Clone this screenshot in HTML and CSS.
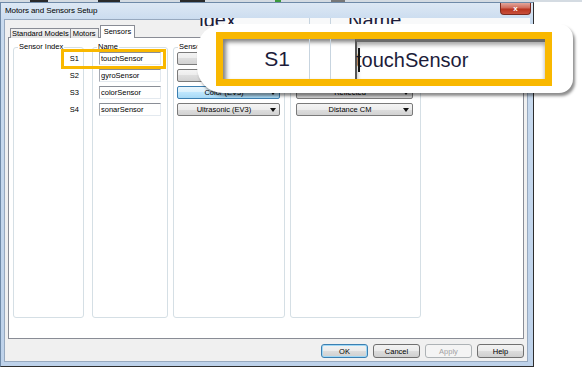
FILE: index.html
```html
<!DOCTYPE html>
<html lang="en">
<head>
  <meta charset="UTF-8" />
  <title>Motors and Sensors Setup</title>
  <link rel="stylesheet" href="styles.css">
</head>
<body>

  <!-- bit of the app behind the dialog -->
  <div class="screen-strip">
    <span class="blip blip-a"></span>
    <span class="blip blip-b"></span>
    <span class="blip blip-c"></span>
    <span class="blip blip-d"></span>
    <span class="blip blip-e"></span>
  </div>

  <div class="window">
    <div class="titlebar">
      <span class="title">Motors and Sensors Setup</span>
      <span class="close-btn">x</span>
    </div>

    <div class="dialog">
      <div class="tabs">
        <span class="tab tab-models">Standard Models</span>
        <span class="tab">Motors</span>
        <span class="tab tab-active">Sensors</span>
      </div>

      <div class="tab-page">
        <fieldset class="group group-index">
          <legend>Sensor Index</legend>
          <div class="rows">
            <div class="port">S1</div>
            <div class="port">S2</div>
            <div class="port">S3</div>
            <div class="port">S4</div>
          </div>
        </fieldset>

        <fieldset class="group group-name">
          <legend>Name</legend>
          <div class="rows">
            <input class="textbox" type="text" value="touchSensor" readonly />
            <input class="textbox" type="text" value="gyroSensor" readonly />
            <input class="textbox" type="text" value="colorSensor" readonly />
            <input class="textbox" type="text" value="sonarSensor" readonly />
          </div>
        </fieldset>

        <fieldset class="group group-sensor">
          <legend>Sensor</legend>
          <div class="rows">
            <div class="combo"><span class="combo-text">Touch (EV3)</span><i class="arrow"></i></div>
            <div class="combo"><span class="combo-text">Gyro (EV3)</span><i class="arrow"></i></div>
            <div class="combo combo-hot"><span class="combo-text">Color (EV3)</span><i class="arrow"></i></div>
            <div class="combo"><span class="combo-text">Ultrasonic (EV3)</span><i class="arrow"></i></div>
          </div>
        </fieldset>

        <fieldset class="group group-mode">
          <legend>Mode</legend>
          <div class="rows">
            <div class="combo"><span class="combo-text">Pressed</span><i class="arrow"></i></div>
            <div class="combo"><span class="combo-text">Angle</span><i class="arrow"></i></div>
            <div class="combo"><span class="combo-text">Reflected</span><i class="arrow"></i></div>
            <div class="combo"><span class="combo-text">Distance CM</span><i class="arrow"></i></div>
          </div>
        </fieldset>
      </div>

      <div class="buttons">
        <button class="btn btn-default">OK</button>
        <button class="btn">Cancel</button>
        <button class="btn" disabled>Apply</button>
        <button class="btn">Help</button>
      </div>
    </div>
  </div>

  <!-- highlight on the S1 row -->
  <div class="mark"></div>

  <!-- magnified view: header strip peeking out above the callout -->
  <div class="zoom-band">
    <div class="zb-col"><span class="zb-head">Sensor Index</span></div>
    <div class="zline"></div>
    <div class="zgap"></div>
    <div class="zline"></div>
    <div class="zb-name"><span class="zb-head">Name</span></div>
  </div>

  <!-- magnified view of the S1 row -->
  <div class="callout">
    <div class="loupe">
      <div class="z-index">S1</div>
      <div class="zline"></div>
      <div class="zgap"></div>
      <div class="zline"></div>
      <div class="zgap zgap-wide"></div>
      <div class="z-textbox"><i class="caret"></i><span class="z-text">touchSensor</span></div>
    </div>
  </div>

</body>
</html>
```

FILE: styles.css
```css
/* Reset & Basic */
* {
  box-sizing: border-box;
}
body {
  margin: 0;
  width: 582px;
  height: 368px;
  overflow: hidden;
  position: relative;
  background: #fff;
  font-family: "Liberation Sans", Arial, sans-serif;
  font-size: 7.5px;
  color: #000;
}

/* strip of the window behind */
.screen-strip {
  height: 2px;
  background: #d4dbe2;
  display: flex;
}
.blip {
  height: 2px;
  background: #2a2a2a;
}
.blip-a { width: 18px; margin-left: 30px; }
.blip-b { width: 22px; margin-left: 50px; }
.blip-c { width: 25px; margin-left: 60px; }
.blip-d { width: 6px; margin-left: 70px; background: #3c9a3c; }
.blip-e { width: 14px; margin-left: 50px; background: #777; }

/* Window frame (Win7 basic) */
.window {
  width: 534px;
  height: 365px;
  border: 1px solid #6f8aa8;
  border-right-color: #2e2e2e;
  border-bottom-color: #2e2e2e;
  padding: 0 5px 4px 3px;
  background: linear-gradient(to bottom, #dde8f4 0, #c9dbef 18px, #bed2ea 100%);
  display: flex;
  flex-direction: column;
}

.titlebar {
  height: 16px;
  display: flex;
  justify-content: space-between;
  align-items: flex-start;
  margin-right: -3px;
}
.title {
  font-size: 8px;
  line-height: 16px;
  padding-left: 1px;
  letter-spacing: -0.1px;
}
.close-btn {
  width: 31px;
  height: 12px;
  border: 1px solid #7a2b20;
  border-top: none;
  border-radius: 0 0 4px 4px;
  background: linear-gradient(to bottom, #e3a69b 0, #cf6a5a 45%, #b8341f 55%, #c9503c 100%);
  color: #fff;
  font-weight: bold;
  font-size: 8px;
  line-height: 11px;
  text-align: center;
}

/* dialog client area */
.dialog {
  flex: 1;
  border: 1px solid #97a9bf;
  background: #f0f0f0;
  padding: 5px 3px 0 3px;
  display: flex;
  flex-direction: column;
}

.tabs {
  height: 13px;
  display: flex;
  align-items: flex-end;
  margin-left: 2px;
  position: relative;
  z-index: 1;
}
.tab {
  height: 10px;
  line-height: 9px;
  padding: 0 2px;
  border: 1px solid #898c95;
  border-bottom: none;
  background: linear-gradient(to bottom, #f2f2f2, #e3e3e3);
  margin-right: -1px;
}
.tab-models {
  padding: 0 1px;
}
.tab-active {
  height: 13px;
  line-height: 11px;
  background: #fff;
  margin-left: 2px;
  padding: 0 3px;
}

.tab-page {
  height: 302px;
  margin-top: -1px;
  border: 1px solid #898c95;
  background: #fff;
  padding: 4px 0 0 4px;
  display: flex;
  align-items: flex-start;
}

/* group boxes */
.group {
  margin: 0;
  padding: 0;
  min-width: 0;
  height: 276px;
  border: 1px solid #d5dfe5;
  border-radius: 3px;
}
.group legend {
  font-size: 7.5px;
  line-height: 10px;
  padding: 0 1px;
  margin-left: 4px;
}
.group-index { width: 71px; margin-right: 8px; }
.group-name { width: 76px; margin-right: 5px; }
.group-sensor { width: 112px; margin-right: 5px; }
.group-mode { width: 131px; }

.rows {
  display: flex;
  flex-direction: column;
  gap: 4px;
}

.port {
  height: 13px;
  line-height: 13px;
  text-align: right;
  padding-right: 4px;
}

.textbox {
  width: 62px;
  height: 13px;
  margin: 0 0 0 6px;
  padding: 0 1px;
  border: 1px solid #e3e9ef;
  border-top-color: #8a8e96;
  border-left-color: #a6aab2;
  font-family: inherit;
  font-size: 7.5px;
  color: #000;
  background: #fff;
  outline: none;
}

.combo {
  height: 13px;
  border: 1px solid #7a7a7a;
  border-radius: 2px;
  background: linear-gradient(to bottom, #f4f4f4 0, #ececec 50%, #dedede 50%, #d2d2d2 100%);
  display: flex;
  align-items: center;
  padding-right: 3px;
}
.group-sensor .combo { width: 103px; margin-left: 3px; }
.group-mode .combo { width: 117px; margin-left: 5px; }
.combo-text {
  flex: 1;
  text-align: center;
  line-height: 11px;
}
.combo-hot {
  border-color: #3c7fb1;
  background: linear-gradient(to bottom, #eaf6fd 0, #d9f0fc 50%, #bee6fd 50%, #a7d9f5 100%);
}
.arrow {
  width: 0;
  height: 0;
  border-left: 3.5px solid transparent;
  border-right: 3.5px solid transparent;
  border-top: 4px solid #111;
}

/* bottom buttons */
.buttons {
  margin-top: 5px;
  display: flex;
  justify-content: flex-end;
  gap: 5px;
}
.btn {
  width: 47px;
  height: 14px;
  padding: 0;
  border: 1px solid #707070;
  border-radius: 3px;
  background: linear-gradient(to bottom, #f2f2f2 0, #ebebeb 50%, #dddddd 50%, #cfcfcf 100%);
  font-family: inherit;
  font-size: 7.5px;
  color: #000;
}
.btn-default {
  border-color: #3c7fb1;
  box-shadow: inset 0 0 0 1px #9fd8f6;
}
.btn:disabled {
  color: #a3a3a3;
  border-color: #adb2b5;
  background: #f4f4f4;
}

/* overlay: orange frame on the S1 row */
.mark {
  position: absolute;
  left: 61px;
  top: 49px;
  width: 105px;
  height: 20px;
  border: 3px solid #f9b800;
  z-index: 2;
}

/* overlay: magnified header strip */
.zoom-band {
  position: absolute;
  left: 200px;
  top: 18px;
  width: 330px;
  height: 8px;
  overflow: hidden;
  background: #f8f9fa;
  display: flex;
  z-index: 3;
}
.zb-col {
  width: 109px;
  padding-right: 73px;
  display: flex;
  justify-content: flex-end;
}
.zb-name {
  padding-left: 17px;
  display: flex;
}
.zb-head {
  font-size: 20px;
  line-height: 20px;
  margin-top: -8px;
  white-space: nowrap;
  color: #1c1c3a;
}
.zline {
  width: 1px;
  background: #c7d4df;
}
.zgap {
  width: 20px;
}
.zgap-wide {
  width: 24px;
}

/* overlay: the callout */
.callout {
  position: absolute;
  left: 197px;
  top: 24px;
  width: 376px;
  height: 69px;
  padding-left: 19px;
  background: #fff;
  border-radius: 26px 14px 14px 26px;
  box-shadow: 2px 3px 3px rgba(0, 0, 0, 0.45);
  display: flex;
  align-items: center;
  z-index: 4;
}
.loupe {
  width: 336px;
  height: 54px;
  border: 7px solid #f9b800;
  box-shadow: inset 3px 3px 4px rgba(0, 0, 0, 0.5);
  display: flex;
}
.z-index {
  width: 86px;
  padding-right: 19px;
  text-align: right;
  font-size: 21px;
  line-height: 40px;
  color: #1c1c3a;
}
.z-textbox {
  flex: 1;
  border-left: 2px solid #555;
  border-top: 3px solid #6a6a6a;
  box-shadow: inset 0 3px 4px rgba(0, 0, 0, 0.35);
  background: #fff;
  display: flex;
  align-items: center;
  padding-left: 1px;
}
.caret {
  width: 2px;
  height: 24px;
  background: #151515;
  position: relative;
  z-index: 1;
}
.z-text {
  margin-left: -4px;
  font-size: 20px;
  line-height: 24px;
  color: #1c1c3a;
}
```
